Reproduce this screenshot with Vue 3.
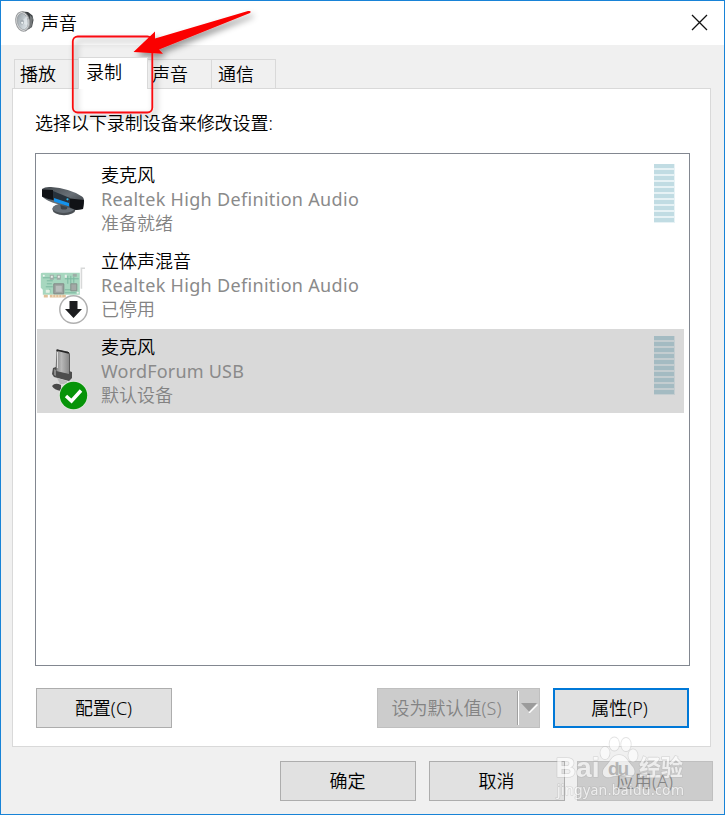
<script setup>
const tabs = [
  { label: '播放', name: 'play' },
  { label: '录制', name: 'record' },
  { label: '声音', name: 'sounds' },
  { label: '通信', name: 'comm' },
]
const devices = [
  { name: '麦克风', driver: 'Realtek High Definition Audio', status: '准备就绪', icon: 'array', meter: true },
  { name: '立体声混音', driver: 'Realtek High Definition Audio', status: '已停用', icon: 'card' },
  { name: '麦克风', driver: 'WordForum USB', status: '默认设备', icon: 'usb', meter: true, selected: true },
]
</script>

<template>
  <div class="window">
    <header class="titlebar">
      <svg class="speaker" width="22" height="24" viewBox="0 0 22 24">
        <defs>
          <linearGradient id="cone" x1="0" y1="0" x2="1" y2="1">
            <stop offset="0" stop-color="#8f979c" /><stop offset=".6" stop-color="#c9d1d6" /><stop offset="1" stop-color="#e9eef0" />
          </linearGradient>
        </defs>
        <path d="M8 1.5 14 2 18.5 5.5 19.5 10 18 17 11 21.5Z" fill="#3c4043" />
        <path d="M16 5 19 8 17.5 17 15 19Z" fill="#737779" />
        <ellipse cx="8.6" cy="11.5" rx="6.8" ry="9.8" fill="#e8e8e8" stroke="#989b9d" stroke-width="1" transform="rotate(-12 8.6 11.5)" />
        <ellipse cx="8.7" cy="11.5" rx="5.4" ry="8.2" fill="url(#cone)" stroke="#8b9296" stroke-width=".6" transform="rotate(-12 8.7 11.5)" />
        <path d="M8 11 13 6V15L9 14Z" fill="#e7edf0" opacity=".6" />
        <ellipse cx="8" cy="12" rx="2" ry="2.5" fill="#a2abb1" />
        <circle cx="8.2" cy="12.8" r="1.1" fill="#eef2f4" />
      </svg>
      <h1 class="title">声音</h1>
      <svg class="close" width="17" height="17" viewBox="0 0 17 17"><path d="M1 1 16 16M16 1 1 16" stroke="#111" stroke-width="1.3" fill="none" /></svg>
    </header>

    <nav class="tabs">
      <div v-for="t in tabs" :key="t.name" class="tab" :class="t.name">{{ t.label }}</div>
    </nav>

    <main class="panel">
      <p class="hint">选择以下录制设备来修改设置:</p>
      <div class="list">
        <div v-for="(d, i) in devices" :key="i" class="device" :class="{ selected: d.selected }">
          <div class="icon">
            <svg v-if="d.icon === 'array'" width="54" height="76" viewBox="0 0 54 76">
              <defs>
                <linearGradient id="body" x1="0" y1="0" x2="1" y2="1"><stop offset="0" stop-color="#42474c" /><stop offset=".5" stop-color="#697077" /><stop offset="1" stop-color="#2b3035" /></linearGradient>
              </defs>
              <g transform="translate(0 4)">
                <ellipse cx="27" cy="48.5" rx="11.5" ry="5.7" fill="#4a4f54" />
                <ellipse cx="26.5" cy="47.3" rx="11" ry="4.6" fill="#687078" />
                <path d="M23 42H31L30 48Q27 49 24 48Z" fill="#3c4248" />
                <path d="M5 28Q8 25.5 14 26Q32 27 45 35.5Q47.5 37 47 42L46 48L39 49L20 43Q10 40 5 35.5Z" fill="url(#body)" />
                <path d="M5 28.5 16 29V39Q10 38 5 35.5ZM33 37.5 47 39 46 48 39 49 33 46.5Z" fill="#101216" />
                <path d="M16 30 33 37V46L16 39Z" fill="#27313b" />
                <path d="M17 37 32 42V45.5L17 40.5Z" fill="#1493ed" />
                <circle cx="30.5" cy="38.3" r="1.1" fill="#31b9e9" />
              </g>
            </svg>
            <svg v-else-if="d.icon === 'card'" width="54" height="84" viewBox="0 0 54 84">
              <g opacity=".7" transform="translate(.8 3.8)">
                <path d="M47.2 21.5H43.6V42" stroke="#c8caca" stroke-width="1.6" fill="none" />
                <path d="M3 27Q3 26 5 26H42V48H5V43L3 41Z" fill="#83c7a5" />
                <path d="M6 48H10V50.7H6ZM12 48H28V50.7H12Z" fill="#d5a56d" />
                <path d="M15 48V50.5M18 48V50.5M21 48V50.5M24 48V50.5" stroke="#f5e4cc" stroke-width=".8" />
                <path d="M9 34H15M9 37H14M27 32H41M12 42V46M30 29V37M33 29V37M36 30V36M8 40H15M27 43H39M5 31H23M27 46H38" stroke="#439c78" stroke-width="1" />
                <path d="M16 37H26V47H16Z" fill="#737d79" stroke="#4d5954" stroke-width="1" /><path d="M18 39H24V45H18Z" fill="#9ba3a0" />
                <path d="M33 37H39V44H33Z" fill="#7d8581" stroke="#52645b" /><path d="M12 28H16V33H12ZM19 28H23V33H19ZM35 27H39V30H35Z" fill="#778b82" />
                <path d="M13 29H15V31H13ZM20 29H22V31H20ZM27 28H29V31H27Z" fill="#dee6df" />
                <path d="M8 43H12V46H8Z" fill="#d7e9d7" />
                <circle cx="6" cy="29" r="1" fill="#e8f1eb" /><circle cx="40" cy="46" r="1" fill="#e8f1eb" />
              </g>
              <circle cx="36.5" cy="66.5" r="13.7" fill="#fff" stroke="#b0b0b0" stroke-width="1.5" />
              <path d="M32.5 58H40.5V66H45L36.5 75 28 66H32.5Z" fill="#1c1d1f" />
            </svg>
            <svg v-else width="54" height="82" viewBox="0 0 54 82">
              <defs>
                <linearGradient id="metal"><stop offset="0" stop-color="#888" /><stop offset=".4" stop-color="#b8b8b8" /><stop offset="1" stop-color="#858585" /></linearGradient>
              </defs>
              <path d="M20 21 31 23Q33 24 32.5 27V46L19 43Z" fill="url(#metal)" stroke="#414141" stroke-width=".8" />
              <path d="M19.5 21 32 24" stroke="#262626" stroke-width="1.5" /><path d="M20.4 23V39" stroke="#ddd" stroke-width="1.2" />
              <path d="M16 39 19 38V42L32 45V42L35 43V49L32 52 17 48 15 45Z" fill="#4d4d4d" />
              <path d="M17 40 19 41V47L17 46Z" fill="#898989" />
              <path d="M20 49 30 52V55H23Z" fill="#bbb" /><path d="M15 57Q18 53 24 56V62Q17 61 15 57Z" fill="#484848" />
              <circle cx="36.5" cy="66.5" r="14.4" fill="#e2eadf" />
              <circle cx="36.5" cy="66.5" r="13.7" fill="#079409" />
              <path d="M29 67 34.5 72 44 61.5" fill="none" stroke="#fff" stroke-width="3.4" />
            </svg>
          </div>
          <div class="info">
            <div class="name">{{ d.name }}</div>
            <div class="driver">{{ d.driver }}</div>
            <div class="status">{{ d.status }}</div>
          </div>
          <div v-if="d.meter" class="meter"><i v-for="n in 10" :key="n" /></div>
        </div>
      </div>
      <div class="actions">
        <button class="btn">配置(C)</button>
        <button class="btn split disabled">
          <span class="main">设为默认值(S)</span>
          <span class="drop"><svg width="17" height="10" viewBox="0 0 17 10"><path d="M8 10 16.5 1.5" stroke="#fff" stroke-width="1.4" /><path d="M0 0H16L8 8.5Z" fill="#9b9b9b" /></svg></span>
        </button>
        <button class="btn primary">属性(P)</button>
      </div>
    </main>

    <footer class="footer">
      <button class="btn">确定</button>
      <button class="btn">取消</button>
      <button class="btn disabled">应用(A)</button>
    </footer>

    <svg class="callout" width="200" height="120" viewBox="60 0 200 120">
      <defs>
        <filter id="shade" x="-20%" y="-20%" width="150%" height="150%"><feDropShadow dx="3" dy="4" stdDeviation="3" flood-color="#000" flood-opacity=".4" /></filter>
      </defs>
      <g filter="url(#shade)">
        <rect x="72.8" y="36.5" width="79.5" height="76" rx="5" fill="none" stroke="#f90b0f" stroke-width="1.8" />
        <path d="M133.5 52 155 31.5V38.5L248 11Q252 10.5 250 13L159 49.5 163 53.8Z" fill="#fb0204" />
      </g>
    </svg>

    <svg class="watermark" width="150" height="72" viewBox="550 730 150 72">
      <g fill="#fff" stroke="#aaa" stroke-opacity=".5" stroke-width="1.6" paint-order="stroke" stroke-linejoin="round" opacity=".66">
        <ellipse cx="605" cy="753" rx="4.6" ry="6.2" /><ellipse cx="614.3" cy="744" rx="4.8" ry="6.6" />
        <ellipse cx="626" cy="744.5" rx="4.8" ry="6.6" /><ellipse cx="633" cy="755.5" rx="4.6" ry="6.2" />
        <path d="M619 755C626 755 628 762 632 766C637 771 634 778 627 777C621 775 617 775 611 777C603 779 600 772 606 766C611 761 612 755 619 755Z" />
        <text class="latin" x="555.5" y="776.5" font-size="28" textLength="44" lengthAdjust="spacingAndGlyphs">Bai</text>
        <text class="cjk" x="639" y="775" font-size="22" textLength="44">经验</text>
        <text class="url" x="557" y="794.5" font-size="14" textLength="127">jingyan.baidu.com</text>
      </g>
      <text class="latin" x="608" y="774.5" font-size="19" fill="#b4b4b4" textLength="21">du</text>
    </svg>
  </div>
</template>

<style>
body { margin: 0; overflow: hidden; }
</style>

<style scoped>
.window { position: relative; box-sizing: border-box; width: 725px; height: 815px; border: 1px solid #1883d7; background: #f0f0f0; color: #000; font: 350 18px/24px "Noto Sans", "Noto Sans CJK SC", sans-serif; display: flex; flex-direction: column; overflow: hidden; }
.titlebar { height: 44px; flex: none; background: #fff; display: flex; align-items: center; padding: 0 16px 0 13px; }
.speaker { margin-top: -3px; }
.title { margin: -1px 0 0 5px; font-size: 18px; line-height: 24px; font-weight: 350; flex: 1; }
.close { margin: -2px 0 0; }
.tabs { display: flex; align-items: flex-end; height: 43px; flex: none; padding-left: 13px; }
.tab { box-sizing: border-box; height: 29px; border: 1px solid #d9d9d9; border-bottom: 0; border-left: 0; padding: 2px 0 0 5px; width: 64px; }
.play { width: 64px; border-left: 1px solid #d9d9d9; border-right: 0; }
.record { position: relative; z-index: 1; width: 70px; height: 32px; margin-bottom: -1px; background: #fff; border-left: 1px solid #d9d9d9; padding: 2px 0 0 7px; }
.sounds { width: 64px; padding-left: 4px; }
.comm { padding-left: 6px; }
.panel { box-sizing: border-box; width: 699px; height: 659px; flex: none; margin-left: 11px; border: 1px solid #d9d9d9; background: #fff; padding: 22px 20px 0 22px; }
.hint { margin: 0 0 18px; line-height: 24px; letter-spacing: -.04px; }
.list { box-sizing: border-box; width: 655px; height: 513px; border: 1px solid #828790; padding: 3px 5px 0 1px; display: flex; flex-direction: column; gap: 2px; }
.device { height: 84px; flex: none; display: flex; }
.device.selected { background: #d9d9d9; }
.icon { width: 64px; height: 84px; }
.icon svg { display: block; }
.info { flex: 1; padding-top: 6px; }
.info div { height: 24px; white-space: nowrap; }
.driver, .status { color: #838383; }
.info .driver { font-weight: 400; letter-spacing: .32px; color: #8a8a8a; }
.selected .info .driver { letter-spacing: .2px; }
.meter { width: 21px; height: 59px; margin: 7px 9px 0 0; background: #e7f2f5; display: flex; flex-direction: column; gap: 2px; }
.meter i { height: 4px; background: #c1dce3; flex: none; margin-right: 1px; }
.selected .meter { background: #c4cdd0; }
.selected .meter i { background: #a4bbc2; }
.actions { display: flex; margin: 22px 1px 0 1px; }
.btn { box-sizing: border-box; width: 136px; height: 40px; border: 1px solid #adadad; border-radius: 0; background: #e1e1e1; color: #000; font: inherit; padding: 0 1px 0 0; white-space: nowrap; flex: none; }
.disabled { background: #ccc; border-color: #bfbfbf; color: #838383; }
.split { width: 163px; margin: 0 13px 0 auto; display: flex; align-items: center; padding: 0; }
.main { box-sizing: border-box; width: 140px; height: 34px; line-height: 34px; border-right: 1px solid #a0a0a0; padding-right: 2px; }
.drop { height: 34px; flex: 1; border-left: 1px solid #fff; display: flex; align-items: center; padding-left: 2px; }
.primary { border: 2px solid #0078d7; padding-right: 3px; }
.footer { display: flex; gap: 13px; padding: 14px 0 0 279px; }
.footer .btn:last-child { margin-left: -1px; }
.callout { position: absolute; left: 59px; top: -1px; pointer-events: none; }
.watermark { position: absolute; left: 549px; top: 729px; pointer-events: none; }
.latin { font-family: "Liberation Sans", sans-serif; font-weight: 700; }
.cjk { font-family: "Noto Sans CJK SC", sans-serif; font-weight: 700; }
.url { font-family: "Noto Sans", sans-serif; font-weight: 400; }
</style>
